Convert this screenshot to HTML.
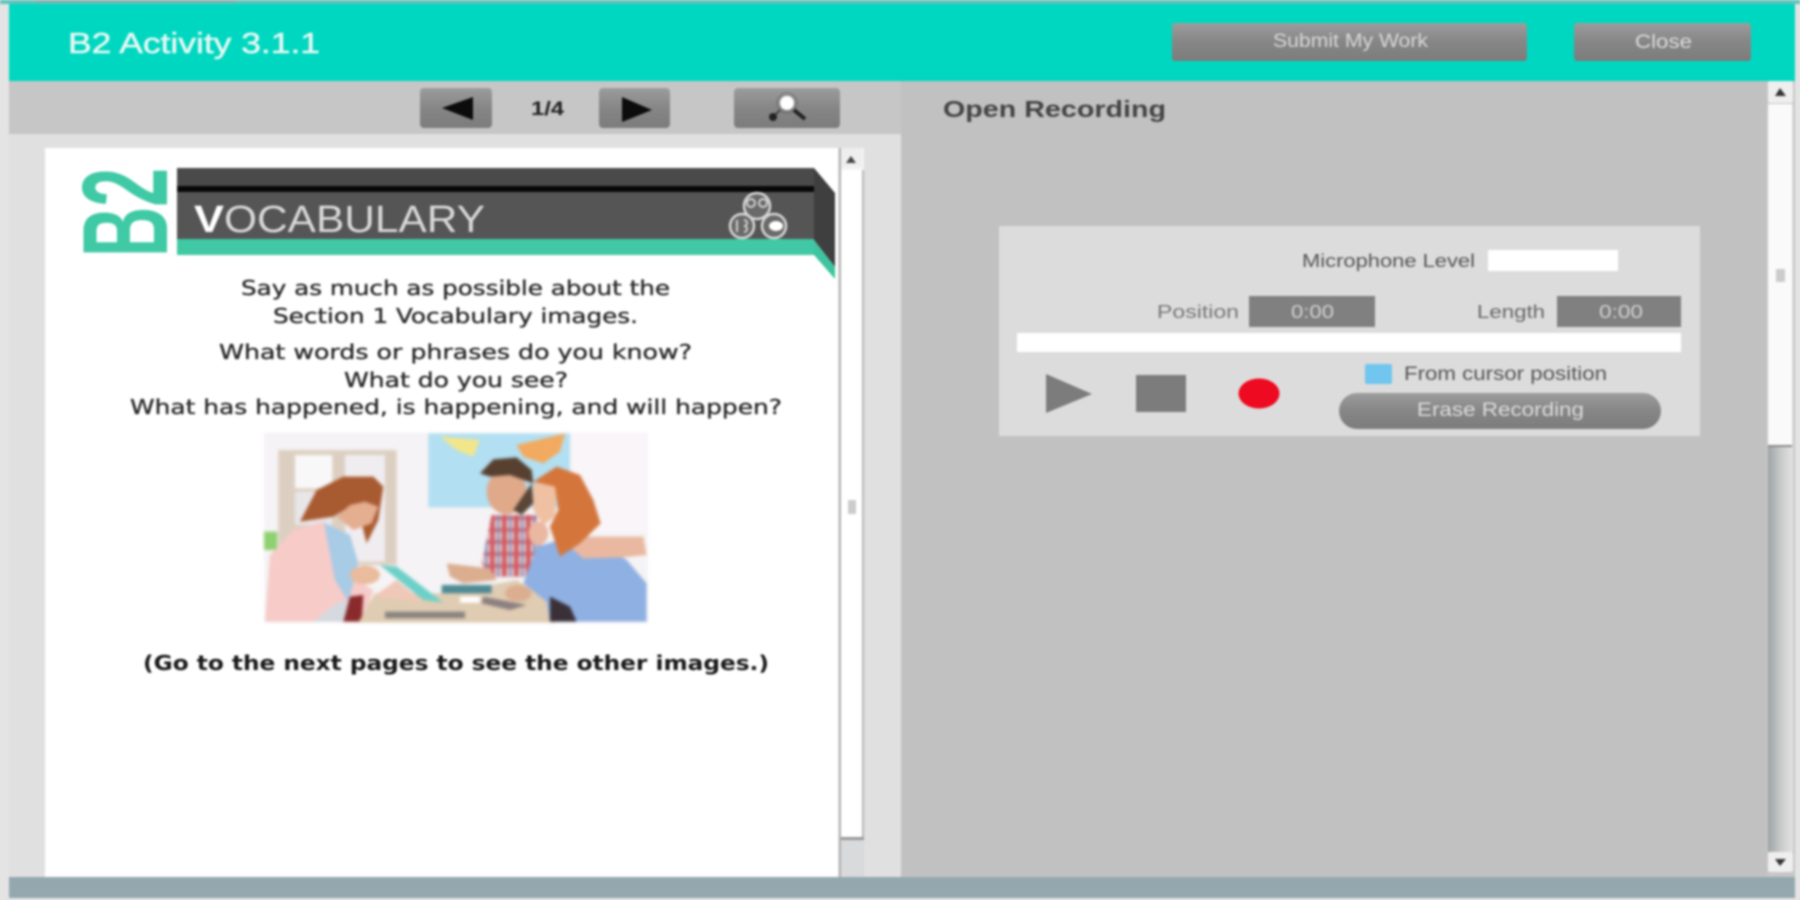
<!DOCTYPE html>
<html lang="en"><head><meta charset="utf-8"><title>B2 Activity 3.1.1</title>
<style>
html,body{margin:0;padding:0;width:1800px;height:900px;overflow:hidden;background:#e4e4e4}
svg{display:block;position:absolute;left:0;top:0}
text{font-family:"Liberation Sans",sans-serif}
.op{font-family:"DejaVu Sans","Liberation Sans",sans-serif;font-size:20px;fill:#2a2a2a;stroke:#2a2a2a;stroke-width:.35px}
.b{stroke:currentColor;stroke-width:.4px}
</style></head><body>
<svg width="1800" height="900" viewBox="0 0 1800 900" xmlns="http://www.w3.org/2000/svg">
<defs>
<linearGradient id="btn" x1="0" y1="0" x2="0" y2="1"><stop offset="0" stop-color="#9c9c9c"/><stop offset="0.5" stop-color="#868686"/><stop offset="1" stop-color="#7c7c7c"/></linearGradient>
<linearGradient id="trk" x1="0" y1="0" x2="1" y2="0"><stop offset="0" stop-color="#9da3a6"/><stop offset="0.5" stop-color="#c8cacb"/><stop offset="1" stop-color="#e4e4e4"/></linearGradient>
<pattern id="plaid" width="36" height="36" patternUnits="userSpaceOnUse"><rect width="36" height="36" fill="#eccdd0"/><rect width="14" height="36" fill="#cf5a62"/><rect width="36" height="12" fill="#cf5a62" opacity=".8"/><rect x="22" width="6" height="36" fill="#7288b6"/></pattern>
</defs>
<g style="filter:blur(1px)">
<rect width="1800" height="900" fill="#e4e4e4"/>
<!-- top strip / header -->
<rect x="0" y="0" width="1800" height="4" fill="#5fc4bc"/>
<rect x="36" y="0" width="200" height="2" fill="#8aa8a4"/>
<rect x="9" y="4" width="1786" height="77" fill="#00d7c0"/>
<text x="68" y="53" font-size="29" fill="#e6f8f4" stroke="#e6f8f4" stroke-width=".5" textLength="252" lengthAdjust="spacingAndGlyphs">B2 Activity 3.1.1</text>
<rect x="1172" y="23" width="355" height="38" rx="3" fill="url(#btn)"/>
<text x="1273" y="47" font-size="19" fill="#d8d8d8" textLength="155" lengthAdjust="spacingAndGlyphs">Submit My Work</text>
<rect x="1574" y="23" width="177" height="38" rx="3" fill="url(#btn)"/>
<text x="1635" y="48" font-size="19" fill="#dcdcdc" textLength="57" lengthAdjust="spacingAndGlyphs">Close</text>
<!-- left pane -->
<rect x="9" y="81" width="892" height="796" fill="#e0e0e0"/>
<rect x="9" y="81" width="892" height="53" fill="#c6c6c6"/>
<rect x="420" y="88" width="72" height="40" rx="4" fill="url(#btn)"/>
<polygon points="442,108 473,97 473,120" fill="#0c0c0c"/>
<text x="531" y="115" font-size="19" font-weight="bold" fill="#222" textLength="33" lengthAdjust="spacingAndGlyphs">1/4</text>
<rect x="599" y="88" width="71" height="40" rx="4" fill="url(#btn)"/>
<polygon points="622,97 652,110 622,122" fill="#0c0c0c"/>
<rect x="734" y="88" width="106" height="40" rx="4" fill="url(#btn)"/>
<circle cx="787" cy="103" r="7" fill="#fff"/><circle cx="787" cy="103" r="10" fill="none" stroke="#555" stroke-width="1.5" opacity=".4"/>
<path d="M794 110L805 119" stroke="#222" stroke-width="4"/><path d="M780 110L775 115" stroke="#444" stroke-width="2"/><circle cx="773" cy="117" r="4" fill="#222"/>
<!-- page -->
<rect x="45" y="148" width="793" height="729" fill="#fff"/>
<!-- B2 rotated -->
<text transform="translate(167,257) rotate(-90)" font-weight="bold" fill="#3fc9a5" textLength="89" lengthAdjust="spacingAndGlyphs" style="font-size:122px">B2</text>
<!-- banner -->
<polygon points="814,168 835,193 835,267 814,240" fill="#3f3f3f"/>
<polygon points="814,240 835,267 835,279 814,255" fill="#3fc4a0"/>
<rect x="177" y="168" width="637" height="19" fill="#4a4a4a"/>
<rect x="177" y="186" width="637" height="6" fill="#080808"/>
<rect x="177" y="192" width="637" height="47" fill="#555"/>
<rect x="177" y="239" width="637" height="16" fill="#40c9a4"/>
<text x="194" y="232" font-size="38" font-weight="bold" fill="#fff" textLength="30" lengthAdjust="spacingAndGlyphs">V</text>
<text x="224" y="232" font-size="38" fill="#d8d8d8" textLength="261" lengthAdjust="spacingAndGlyphs">OCABULARY</text>
<g fill="#6a6a6a" stroke="#d6d6d6" stroke-width="2.500">
<circle cx="757" cy="206" r="13"/><circle cx="742" cy="226" r="12"/><circle cx="774" cy="226" r="12"/>
</g>
<g fill="none" stroke="#cfcfcf" stroke-width="2"><circle cx="751" cy="203" r="4"/><circle cx="763" cy="203" r="4"/><path d="M737 220V232M744 220a3 3 0 0 1 0 6a3 3 0 0 1 0 6"/></g>
<ellipse cx="776" cy="226" rx="7" ry="5" fill="#fff"/>
<!-- body text -->
<text class="op" x="241" y="295" textLength="429" lengthAdjust="spacingAndGlyphs">Say as much as possible about the</text>
<text class="op" x="273" y="323" textLength="365" lengthAdjust="spacingAndGlyphs">Section 1 Vocabulary images.</text>
<text class="op" x="219" y="359" textLength="473" lengthAdjust="spacingAndGlyphs">What words or phrases do you know?</text>
<text class="op" x="344" y="387" textLength="224" lengthAdjust="spacingAndGlyphs">What do you see?</text>
<text class="op" x="130" y="414" textLength="652" lengthAdjust="spacingAndGlyphs">What has happened, is happening, and will happen?</text>
<text class="op" x="143" y="670" font-weight="bold" style="fill:#1a1a1a;stroke:none" textLength="626" lengthAdjust="spacingAndGlyphs">(Go to the next pages to see the other images.)</text>
<!-- photo -->
<g transform="translate(250,420) scale(.3333)" style="filter:blur(4px)">
<rect x="42" y="38" width="1152" height="570" fill="#f5f3f5"/>
<rect x="960" y="38" width="234" height="300" fill="#f9f5f9"/>
<rect x="85" y="90" width="355" height="345" fill="#dccfc1"/>
<rect x="135" y="105" width="112" height="100" fill="#f9f8f9"/><rect x="135" y="215" width="112" height="100" fill="#e9e6e9"/>
<rect x="285" y="105" width="120" height="320" fill="#f0edf0"/>
<rect x="42" y="335" width="40" height="55" fill="#8fd070"/>
<rect x="535" y="40" width="425" height="222" fill="#b2dff2"/>
<polygon points="570,50 690,60 670,110 620,90" fill="#f2e68a"/>
<polygon points="800,75 945,40 930,95 880,130 820,110" fill="#f2aa60"/>
<!-- woman 1 -->
<polygon points="45,605 60,405 130,330 220,305 300,470 370,510 340,605" fill="#f7cbc8"/>
<polygon points="222,308 300,345 325,430 295,545 255,480" fill="#a8cbe6"/>
<polygon points="190,605 265,545 300,545 280,605" fill="#d4dadf"/>
<polygon points="280,605 300,530 340,525 335,605" fill="#8a2a2c"/>
<polygon points="150,305 200,210 280,170 370,170 400,200 385,300 350,370 335,310 340,260 300,260 250,290" fill="#a85a30"/>
<polygon points="260,290 300,255 345,245 385,260 365,310 310,330" fill="#e4ae90"/>
<ellipse cx="345" cy="465" rx="45" ry="28" fill="#eabb9c"/>
<!-- table -->
<polygon points="325,608 375,520 590,520 800,480 890,540 920,608" fill="#dfccb2"/>
<polygon points="390,435 440,440 580,548 520,540" fill="#6cd0c8"/>
<polygon points="440,480 520,545 370,530" fill="#f0c8b8"/>
<rect x="575" y="495" width="150" height="25" fill="#4f8a94"/>
<rect x="630" y="530" width="60" height="18" fill="#fff"/>
<polygon points="700,530 830,555 780,570 695,550" fill="#8c8080"/>
<rect x="405" y="575" width="240" height="20" fill="#8a8580"/>
<!-- man -->
<polygon points="725,285 860,285 880,470 830,470 720,470 695,430" fill="url(#plaid)"/>
<polygon points="590,430 720,445 740,480 640,490 600,470" fill="#dcae90"/>
<ellipse cx="770" cy="215" rx="60" ry="68" fill="#dfa98a"/>
<polygon points="690,160 730,118 800,112 845,150 850,190 780,165 720,170" fill="#574030"/>
<polygon points="790,270 845,190 850,250 815,285" fill="#5a4636"/>
<!-- woman 2 -->
<polygon points="820,490 860,380 1000,340 1130,420 1190,490 1190,605 900,605 890,545" fill="#8fb0e2"/>
<polygon points="900,530 960,560 980,605 900,605" fill="#3a3038"/>
<polygon points="965,385 1010,350 1180,350 1190,405 1120,412 1000,415" fill="#eab8a0"/>
<polygon points="850,190 870,190 920,200 915,290 880,315 850,270" fill="#f0c0a2"/>
<polygon points="850,185 920,140 990,165 1030,240 1052,310 990,370 930,410 900,320 925,270 915,200" fill="#d4763c"/>
<ellipse cx="865" cy="340" rx="30" ry="35" fill="#eab8a0"/>
<ellipse cx="805" cy="520" rx="40" ry="25" fill="#dcae90"/>
</g>
<!-- left scrollbar -->
<rect x="839" y="148" width="25" height="729" fill="#f4f4f4"/>
<rect x="839" y="148" width="2" height="729" fill="#b0b0b0"/>
<rect x="841" y="148" width="21" height="19" fill="#eeeeee"/><polygon points="851,156 846,163 856,163" fill="#444"/>
<rect x="841" y="170" width="21" height="667" fill="#fff"/>
<rect x="862" y="170" width="2" height="667" fill="#b8b8b8"/>
<rect x="848" y="500" width="8" height="14" fill="#cccccc"/>
<rect x="841" y="837" width="23" height="40" fill="#d8dadb"/><rect x="841" y="837" width="23" height="3" fill="#999"/>
<!-- right pane -->
<rect x="901" y="81" width="866" height="796" fill="#c1c1c1"/>
<text x="943" y="117" font-size="23" font-weight="bold" fill="#444" textLength="223" lengthAdjust="spacingAndGlyphs">Open Recording</text>
<!-- recorder card -->
<rect x="999" y="226" width="701" height="210" fill="#dcdcdc"/>
<text x="1302" y="267" font-size="18" fill="#555" textLength="173" lengthAdjust="spacingAndGlyphs">Microphone Level</text>
<rect x="1488" y="250" width="130" height="21" fill="#fff"/>
<text x="1157" y="318" font-size="18" fill="#777" textLength="82" lengthAdjust="spacingAndGlyphs">Position</text>
<rect x="1249" y="296" width="126" height="31" fill="#808080"/>
<text x="1291" y="318" font-size="18" fill="#d0d0d0" textLength="43" lengthAdjust="spacingAndGlyphs">0:00</text>
<text x="1477" y="318" font-size="18" fill="#666" textLength="68" lengthAdjust="spacingAndGlyphs">Length</text>
<rect x="1557" y="296" width="124" height="31" fill="#808080"/>
<text x="1599" y="318" font-size="18" fill="#d0d0d0" textLength="44" lengthAdjust="spacingAndGlyphs">0:00</text>
<rect x="1017" y="333" width="664" height="19" fill="#fff"/>
<polygon points="1046,374 1092,394 1046,413" fill="#7c7c7c"/>
<rect x="1136" y="375" width="50" height="37" fill="#7c7c7c"/>
<ellipse cx="1259" cy="393.500" rx="20.500" ry="15" fill="#ee0a20"/>
<rect x="1365" y="364" width="27" height="20" rx="2" fill="#70c6ee"/>
<text x="1404" y="380" font-size="19" fill="#555" textLength="203" lengthAdjust="spacingAndGlyphs">From cursor position</text>
<rect x="1339" y="393" width="322" height="36" rx="18" fill="url(#btn)"/>
<text x="1417" y="416" font-size="19" fill="#dcdcdc" textLength="167" lengthAdjust="spacingAndGlyphs">Erase Recording</text>
<!-- right scrollbar -->
<rect x="1767" y="81" width="28" height="796" fill="#c6c6c6"/>
<rect x="1768" y="104" width="25" height="748" fill="url(#trk)"/>
<rect x="1768" y="81" width="25" height="22" rx="2" fill="#efefef"/><polygon points="1780,88 1775,96 1786,96" fill="#333"/>
<rect x="1768" y="104" width="24" height="342" fill="#fafafa"/><rect x="1768" y="445" width="24" height="2" fill="#8a8a8a"/>
<rect x="1776" y="269" width="9" height="13" fill="#cccccc"/>
<rect x="1768" y="852" width="25" height="20" rx="2" fill="#efefef"/><polygon points="1775,859 1786,859 1780,866" fill="#333"/>
<!-- bottom bar -->
<rect x="9" y="877" width="1786" height="21" fill="#94a7af"/>
</g>
</svg>
</body></html>
